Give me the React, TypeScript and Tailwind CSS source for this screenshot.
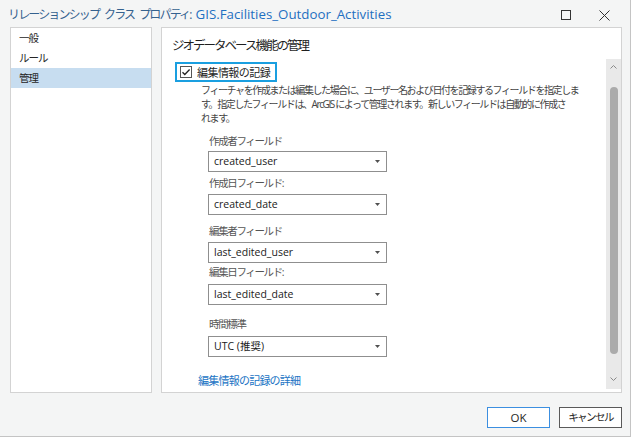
import React from 'react';

const font = "[font-family:'Open_Sans','Noto_Sans_CJK_JP',sans-serif]";

const Dropdown = ({ value, className = '' }: { value: string; className?: string }) => (
  <div
    className={`flex h-[21px] w-[179px] items-center justify-between border border-[#8f8f8f] bg-white pl-[5px] pr-[6px] text-[10.5px] leading-none text-[#1a1a1a] ${className}`}
  >
    <span>{value}</span>
    <svg width="5" height="3" viewBox="0 0 5 3">
      <path d="M0 0h5L2.5 3z" fill="#505050" />
    </svg>
  </div>
);

const FieldLabel = ({ text, className = '' }: { text: string; className?: string }) => (
  <div className={`h-[16px] pl-[47px] text-[10.5px] leading-[16px] tracking-[-0.13em] text-[#555] ${className}`}>
    {text}
  </div>
);

const navItems = ['一般', 'ルール', '管理'];
const titleWords = ['リレーションシップ', 'クラス', 'プロパティ:'];

export default function App() {
  return (
    <div className={`h-[438px] w-[632px] bg-white ${font}`}>
      <div className="flex h-[437px] w-[631px] flex-col border-r border-b border-[#c4c4c4] bg-[#f4f5f5]">
        {/* title bar */}
        <div className="flex h-[27px] items-center pt-[3px] pl-[8px]">
          <div className="flex flex-1 items-baseline whitespace-nowrap leading-none">
            {titleWords.map((w, i) => (
              <span key={w} className={`text-[12px] tracking-[-0.155em] text-[#35628f] ${i > 0 ? 'ml-[5px]' : ''}`}>
                {w}
              </span>
            ))}
            <span className="ml-[5px] text-[13.3px] text-[#1f70c1]">GIS.Facilities_Outdoor_Activities</span>
          </div>
          <div className="flex items-center gap-[28px] pr-[20px]">
            <svg width="10" height="10" viewBox="0 0 10 10">
              <rect x="0.5" y="0.5" width="9" height="9" fill="none" stroke="#333" strokeWidth="1" />
            </svg>
            <svg width="11" height="11" viewBox="0 0 11 11">
              <path d="M0.5 0.5l10 10M10.5 0.5l-10 10" stroke="#333" strokeWidth="1" />
            </svg>
          </div>
        </div>

        {/* body */}
        <div className="flex h-[366px] gap-[9px] pr-[8px] pl-[10px]">
          <div className="w-[142px] border border-[#d3d3d3] bg-white">
            {navItems.map((item, i) => (
              <div
                key={item}
                className={`h-[20px] pl-[8px] text-[10.5px] leading-[20px] tracking-[-0.1em] text-[#262626] ${i === 2 ? 'bg-[#c7ddf0]' : ''}`}
              >
                {item}
              </div>
            ))}
          </div>

          <div className="flex w-[461px] flex-col border border-[#d3d3d3] bg-white pb-[3px]">
            <div className="h-[32px] pt-[9px] pl-[10px] text-[12.5px] leading-[18px] tracking-[-0.16em] text-[#1f1f1f]">
              ジオデータベース機能の管理
            </div>
            <div className="flex flex-1">
              <div className="flex-1">
                <div className="mt-[2px] ml-[13px] inline-flex h-[20px] items-center border-2 border-[#1a9fe0] pr-[5px] pl-[3px]">
                  <div className="flex h-[12px] w-[12px] items-center justify-center border border-[#555] bg-white">
                    <svg width="10" height="10" viewBox="0 0 10 10">
                      <path d="M1.5 5.2l2.3 2.3 4.8-5" fill="none" stroke="#222" strokeWidth="1.3" />
                    </svg>
                  </div>
                  <span className="ml-[5px] whitespace-nowrap text-[11px] leading-none tracking-[-0.05em] text-[#1f1f1f]">
                    編集情報の記録
                  </span>
                </div>
                <p className="ml-[39px] whitespace-nowrap text-[10px] leading-[14px] tracking-[-0.14em] text-[#444]">
                  フィーチャを作成または編集した場合に、ユーザー名および日付を記録するフィールドを指定しま
                  <br />
                  す。指定したフィールドは、ArcGIS によって管理されます。新しいフィールドは自動的に作成さ
                  <br />
                  れます。
                </p>

                <FieldLabel text="作成者フィールド" className="mt-[8px]" />
                <Dropdown value="created_user" className="mt-[2px] ml-[46px]" />
                <FieldLabel text="作成日フィールド:" className="mt-[3px]" />
                <Dropdown value="created_date" className="mt-[3px] ml-[46px]" />

                <FieldLabel text="編集者フィールド" className="mt-[8px]" />
                <Dropdown value="last_edited_user" className="mt-[3px] ml-[46px]" />
                <FieldLabel text="編集日フィールド:" className="mt-[1px]" />
                <Dropdown value="last_edited_date" className="mt-[4px] ml-[46px]" />

                <FieldLabel text="時間標準" className="mt-[11px]" />
                <Dropdown value="UTC (推奨)" className="mt-[4px] ml-[46px]" />

                <div className="mt-[16px] ml-[36px] text-[11px] leading-[16px] tracking-[-0.07em] text-[#1b74c4]">
                  編集情報の記録の詳細
                </div>
              </div>

              {/* scrollbar */}
              <div className="flex w-[15px] flex-col items-center bg-[#e9e9e9]">
                <svg width="7" height="4" viewBox="0 0 7 4" className="mt-[6px]">
                  <path d="M0.5 3.5l3-3 3 3" fill="none" stroke="#8a8a8a" strokeWidth="1" />
                </svg>
                <div className="mt-[18px] h-[267px] w-[8px] rounded-full bg-[#ababab]" />
                <svg width="7" height="4" viewBox="0 0 7 4" className="mt-[23px]">
                  <path d="M0.5 0.5l3 3 3-3" fill="none" stroke="#8a8a8a" strokeWidth="1" />
                </svg>
              </div>
            </div>
          </div>
        </div>

        {/* footer */}
        <div className="flex justify-end gap-[9px] pt-[14px] pr-[8px]">
          <button className="h-[21px] w-[63px] border border-[#3c8fe0] bg-white text-[11.5px] leading-none text-[#1f1f1f]">
            OK
          </button>
          <button className="h-[21px] w-[63px] border border-[#5a5a5a] bg-white text-[10.5px] leading-none tracking-[-0.15em] text-[#1f1f1f]">
            キャンセル
          </button>
        </div>
      </div>
    </div>
  );
}
